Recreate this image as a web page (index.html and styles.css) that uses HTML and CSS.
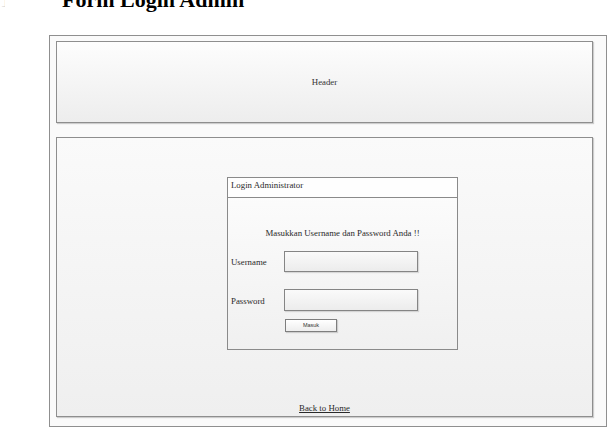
FILE: index.html
```html
<!DOCTYPE html>
<html>
<head>
<meta charset="utf-8">
<link rel="stylesheet" href="styles.css">
</head>
<body>
<div class="heading"><span class="stray">1</span><h1>Form Login Admin</h1></div>
<div class="frame">
  <div class="header-box">Header</div>
  <div class="content-box">
    <div class="login">
      <div class="login-title">Login Administrator</div>
      <div class="login-body">
        <p class="prompt">Masukkan Username dan Password Anda !!</p>
        <div class="row row-user"><span class="label">Username</span><div class="input input-user"></div></div>
        <div class="row row-pass"><span class="label">Password</span><div class="input input-pass"></div></div>
        <div class="btn">Masuk</div>
      </div>
    </div>
    <a class="back">Back to Home</a>
  </div>
</div>
</body>
</html>
```

FILE: styles.css
```css
html, body {
  margin: 0;
  padding: 0;
  background: #ffffff;
}
body {
  font-family: "Liberation Serif", "Times New Roman", serif;
  color: #2a2a2a;
}
.heading {
  display: flex;
  height: 22px;
  margin-top: -11px;
}
.stray {
  width: 5px;
  overflow: hidden;
  font-size: 22px;
  line-height: 22px;
  color: #d8d8d8;
}
.heading h1 {
  margin: 0 0 0 57px;
  font-size: 22px;
  line-height: 22px;
  font-weight: bold;
  color: #000;
}
.frame {
  margin: 24px 0 0 49px;
  width: 558px;
  height: 392px;
  box-sizing: border-box;
  border: 1px solid #8f8f8f;
  background: #fafafa;
  padding: 5px 13px 9px 6px;
  display: flex;
  flex-direction: column;
  gap: 14px;
}
.header-box {
  height: 82px;
  box-sizing: border-box;
  border: 1px solid #8e8e8e;
  box-shadow: 1px 1px 1px rgba(0,0,0,0.18);
  background: linear-gradient(#fdfdfd, #ededed);
  display: flex;
  align-items: center;
  justify-content: center;
  font-size: 8.8px;
  color: #333;
}
.content-box {
  flex: 1;
  box-sizing: border-box;
  border: 1px solid #8e8e8e;
  box-shadow: 1px 1px 1px rgba(0,0,0,0.18);
  background: linear-gradient(#fafafa, #efefef);
  display: flex;
  flex-direction: column;
  padding: 39px 0 1px 170px;
}
.login {
  width: 231px;
  height: 173px;
  box-sizing: border-box;
  border: 1px solid #8a8a8a;
  background: linear-gradient(#fdfdfd, #f0f0f0);
  display: flex;
  flex-direction: column;
}
.login-title {
  height: 20px;
  box-sizing: border-box;
  border-bottom: 1px solid #8a8a8a;
  background: #fefefe;
  padding: 1px 0 0 3px;
  font-size: 8.8px;
  line-height: 12px;
  color: #2a2a2a;
}
.login-body {
  padding: 0 0 0 3px;
  display: flex;
  flex-direction: column;
}
.prompt {
  margin: 29px 0 0 -3px;
  text-align: center;
  font-size: 8.8px;
  line-height: 12px;
  color: #2a2a2a;
}
.row {
  display: flex;
  align-items: center;
  font-size: 8.8px;
  color: #2a2a2a;
}
.row-user {
  margin-top: 12px;
}
.row-pass {
  margin-top: 17px;
}
.label {
  width: 53px;
  padding-top: 1px;
}
.input {
  width: 134px;
  box-sizing: border-box;
  border: 1px solid #858585;
  box-shadow: 1px 1px 1px rgba(0,0,0,0.12);
  background: linear-gradient(#fafafa, #ececec);
}
.input-user {
  height: 21px;
}
.input-pass {
  height: 22px;
}
.btn {
  margin: 8px 0 0 54px;
  width: 52px;
  height: 13px;
  box-sizing: border-box;
  border: 1px solid #7e7e7e;
  box-shadow: 1px 1px 1px rgba(0,0,0,0.15);
  background: linear-gradient(#ffffff, #eeeeee);
  font-family: "Liberation Sans", Arial, sans-serif;
  font-size: 5.5px;
  line-height: 11px;
  text-align: center;
  color: #333;
}
.back {
  margin: auto 0 0 -170px;
  align-self: center;
  font-size: 8.8px;
  line-height: 12px;
  color: #2a2a2a;
  text-decoration: underline;
  padding-bottom: 1px;
}
```
